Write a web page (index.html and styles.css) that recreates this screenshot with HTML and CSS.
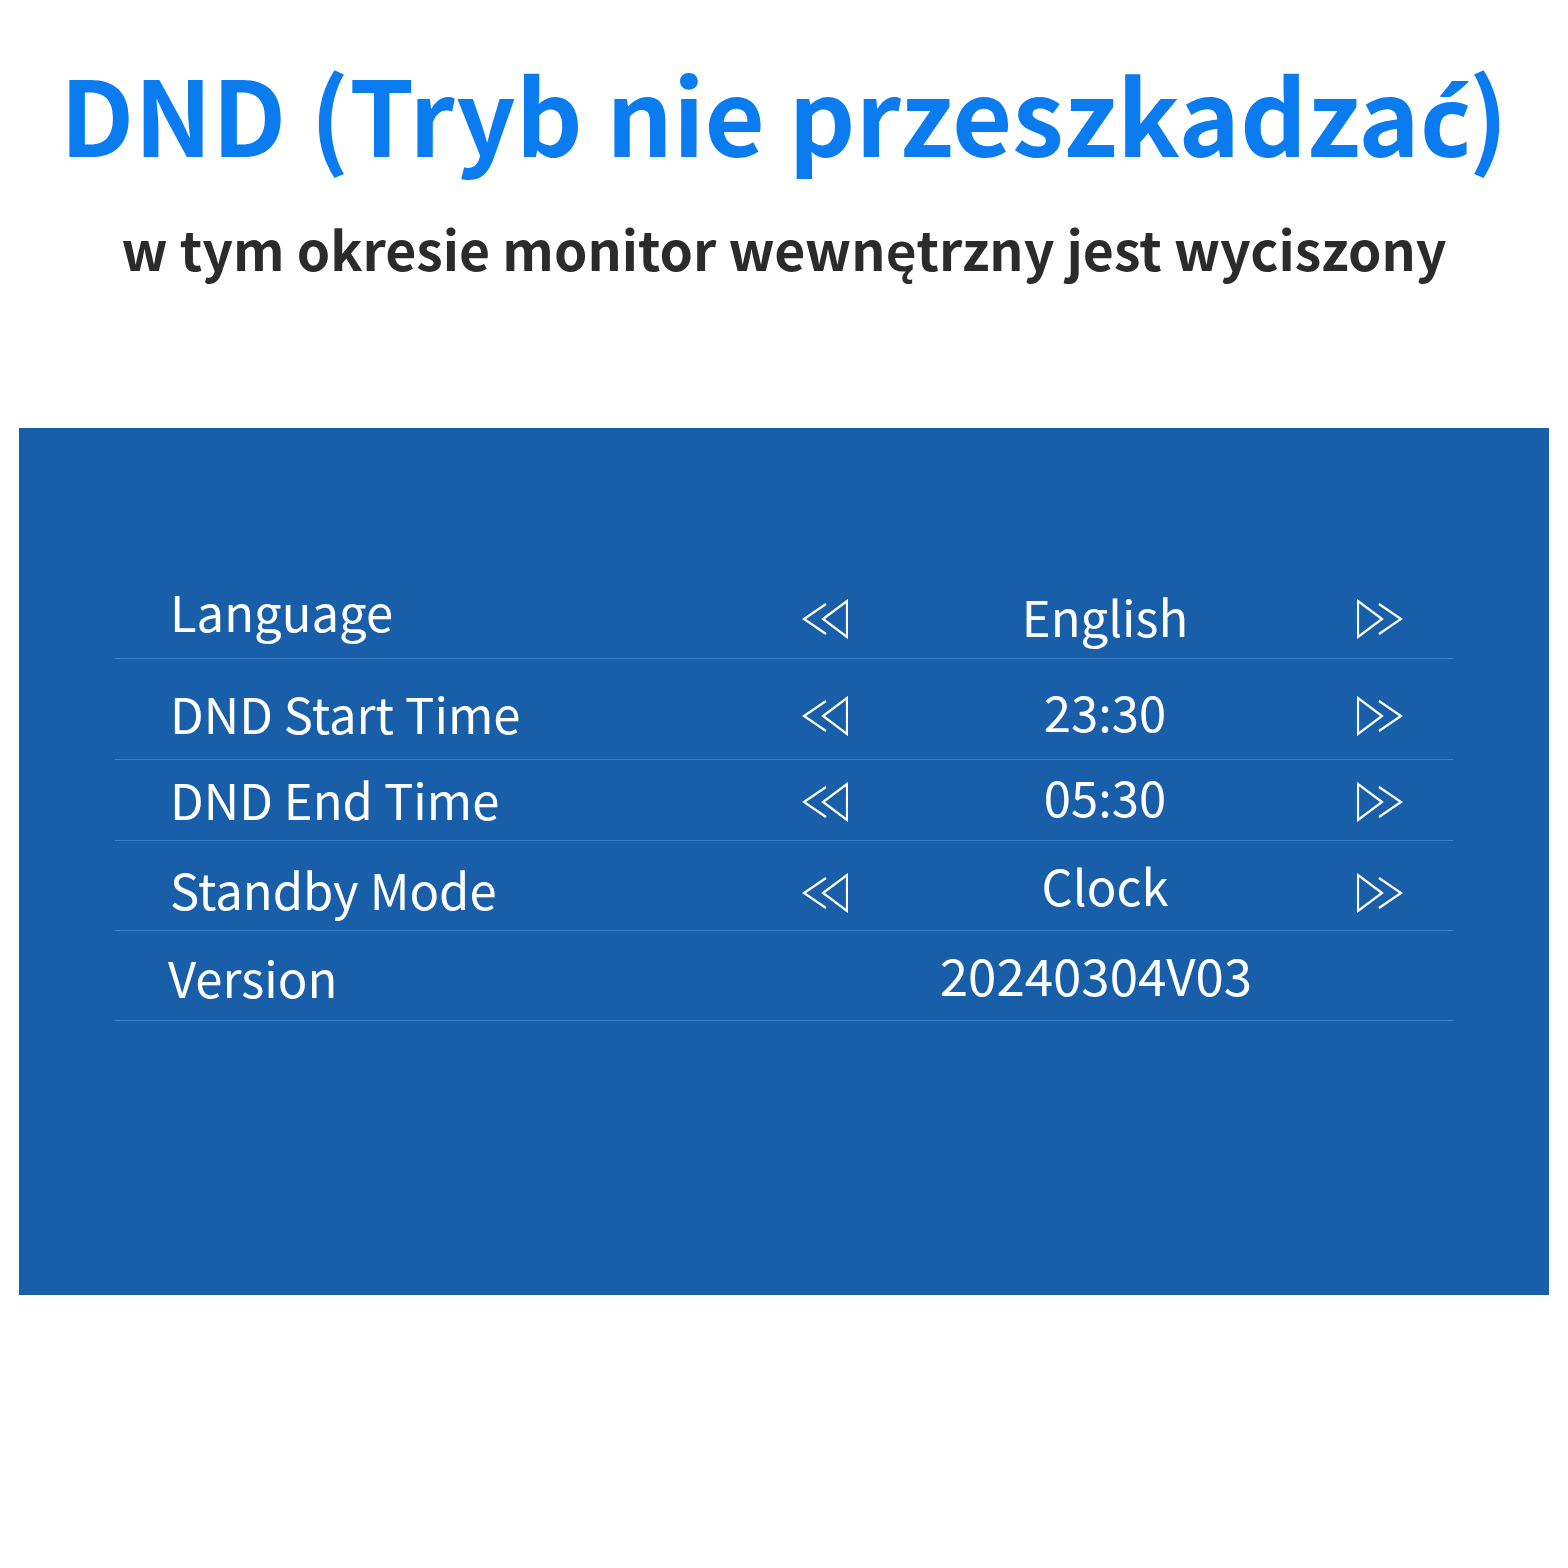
FILE: index.html
```html
<!DOCTYPE html>
<html lang="pl">

<head>
    <meta charset="UTF-8">
    <meta name="viewport" content="width=device-width, initial-scale=1.0">
    <title>DND</title>

    <link rel="stylesheet" href="styles.css">

</head>

<body>
    <header class="intro">
        <h1 class="title">DND (Tryb nie przeszkadza<span class="accent-char">ć</span>)</h1>
        <p class="subtitle">w tym okresie monitor wewnętrzny jest wyciszony</p>
    </header>

    <div class="screen">
        <ul class="menu">
            <li class="menu-row row-lang">
                <span class="label">Language</span>
                <span class="arrow"><svg viewBox="0 0 46 40"><path d="M24 5 L2 20 L24 35" /><path d="M21 20 L45 2 L45 38 Z" /></svg></span>
                <span class="value">English</span>
                <span class="arrow"><svg viewBox="0 0 46 40"><path d="M22 5 L44 20 L22 35" /><path d="M25 20 L1 2 L1 38 Z" /></svg></span>
            </li>
            <li class="menu-row row-start">
                <span class="label">DND Start Time</span>
                <span class="arrow"><svg viewBox="0 0 46 40"><path d="M24 5 L2 20 L24 35" /><path d="M21 20 L45 2 L45 38 Z" /></svg></span>
                <span class="value">23:30</span>
                <span class="arrow"><svg viewBox="0 0 46 40"><path d="M22 5 L44 20 L22 35" /><path d="M25 20 L1 2 L1 38 Z" /></svg></span>
            </li>
            <li class="menu-row row-end">
                <span class="label">DND End Time</span>
                <span class="arrow"><svg viewBox="0 0 46 40"><path d="M24 5 L2 20 L24 35" /><path d="M21 20 L45 2 L45 38 Z" /></svg></span>
                <span class="value">05:30</span>
                <span class="arrow"><svg viewBox="0 0 46 40"><path d="M22 5 L44 20 L22 35" /><path d="M25 20 L1 2 L1 38 Z" /></svg></span>
            </li>
            <li class="menu-row row-standby">
                <span class="label">Standby Mode</span>
                <span class="arrow"><svg viewBox="0 0 46 40"><path d="M24 5 L2 20 L24 35" /><path d="M21 20 L45 2 L45 38 Z" /></svg></span>
                <span class="value">Clock</span>
                <span class="arrow"><svg viewBox="0 0 46 40"><path d="M22 5 L44 20 L22 35" /><path d="M25 20 L1 2 L1 38 Z" /></svg></span>
            </li>
            <li class="menu-row row-version">
                <span class="label">Version</span>
                <span class="arrow"></span>
                <span class="value version">20240304V03</span>
                <span class="arrow"></span>
            </li>
        </ul>
    </div>

</body>

</html>
```

FILE: styles.css
```css
* {
    margin: 0;
    padding: 0;
    box-sizing: border-box;
    font-family: "Noto Sans CJK SC", "Noto Sans", sans-serif;
}

body {
    background: #fff;
    width: 1568px;
    min-height: 1568px;
}

.intro {
    text-align: center;
    padding-top: 52px;
    height: 428px;
}

.title {
    font-size: 104px;
    font-weight: 700;
    line-height: 120px;
    height: 120px;
    color: #0a7cf0;
    white-space: nowrap;
}

/* the CJK face has a broken c-acute, borrow it from Noto Sans */
.accent-char {
    font-family: "Noto Sans", sans-serif;
    font-size: 99px;
    line-height: 1;
    letter-spacing: -2px;
}

.subtitle {
    margin-top: 41px;
    font-size: 53.5px;
    font-weight: 600;
    line-height: 70px;
    color: #2b2b2b;
}

/* blue device screen */
.screen {
    margin-left: 19px;
    width: 1530px;
    height: 867px;
    background: #195ea8;
    padding: 142px 96px 0 96px;
}

.menu {
    list-style: none;
}

.menu-row {
    display: grid;
    grid-template-columns: 665px 90px 470px 80px 1fr;
    align-items: center;
    border-bottom: 1px solid #3b7fc6;
    color: #fff;
    font-size: 49px;
}

.row-lang {
    height: 89px;
    padding-bottom: 10px;
}

.row-start {
    height: 101px;
    padding-top: 6px;
}

.row-end {
    height: 81px;
    padding-bottom: 8px;
}

.row-standby {
    height: 90px;
    padding-top: 6px;
}

.row-version {
    height: 90px;
    padding-top: 2px;
}

.label {
    padding-left: 55px;
}

.row-version .label {
    padding-left: 53px;
}

.arrow {
    display: flex;
    justify-content: center;
}

.row-lang .arrow { padding-top: 16px; }
.row-start .arrow { padding-top: 8px; }
.row-end .arrow { padding-top: 6px; }
.row-standby .arrow { padding-top: 8px; }

.arrow svg {
    width: 46px;
    height: 40px;
    fill: none;
    stroke: #fff;
    stroke-width: 2.2;
    stroke-linejoin: miter;
}

.value {
    text-align: center;
}

.row-lang .value { padding-top: 10px; }
.row-start .value { padding-bottom: 4px; }
.row-end .value { padding-bottom: 6px; }
.row-standby .value { padding-bottom: 8px; }

.value.version {
    font-size: 51px;
    margin-left: -18px;
    padding-bottom: 6px;
}
```
